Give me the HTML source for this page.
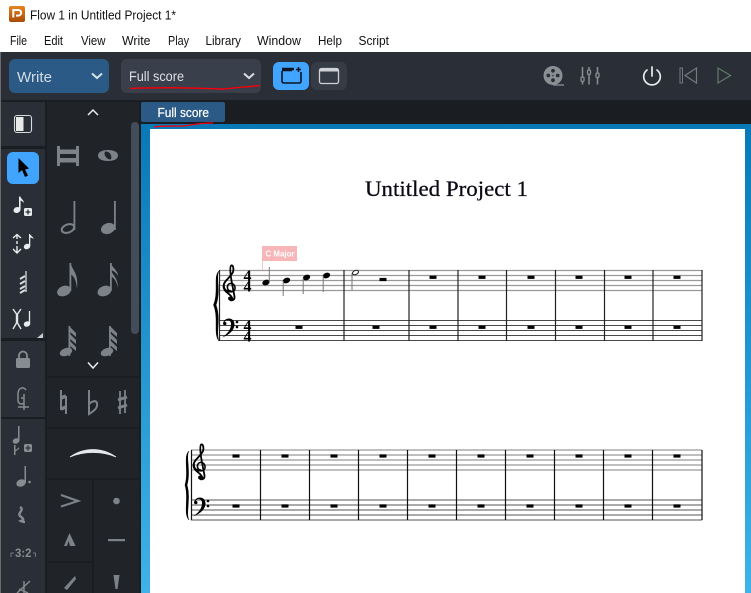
<!DOCTYPE html>
<html><head><meta charset="utf-8"><title>Flow 1</title>
<style>
html,body{margin:0;padding:0;width:751px;height:593px;overflow:hidden;background:#fff}
svg{display:block}
text{font-family:"Liberation Sans",sans-serif}
.m{font-size:12.5px;fill:#111}
</style></head><body>
<svg width="751" height="593" viewBox="0 0 751 593" xmlns="http://www.w3.org/2000/svg">
<defs>
<linearGradient id="bg" x1="0" y1="0" x2="0" y2="1"><stop offset="0" stop-color="#0879b6"/><stop offset="1" stop-color="#40b2e8"/></linearGradient>
<linearGradient id="ic" x1="0" y1="0" x2="0" y2="1"><stop offset="0" stop-color="#e8831f"/><stop offset="1" stop-color="#a84a08"/></linearGradient>
<g id="rest"><rect x="-3.500" y="-1.600" width="7" height="3.200" fill="#000"/></g>
<g id="clef" fill="none" stroke="#000" stroke-linecap="round">
<path d="M1.600 18 C1.600 12 -7.500 11 -7.500 4 C-7.500 -1 0 -5 2 -10 C3.200 -13.500 1.800 -17 .4 -16.600 C-1.300 -16 -1.300 -10 1.500 4 L3.500 14.500 C4 18.500 -.5 19.500 -1.500 17" stroke-width="1.800"/>
<path d="M-.4 9 C-4.600 8.600 -4.600 2.200 -.6 1.400 C4.200 .8 6 8.400 1.400 9.600 C-3 10.600 -7.500 8 -7 3" stroke-width="1.600"/>
<circle cx="-1" cy="16.500" r="1.900" fill="#000" stroke="none"/>
</g>
<g id="bass" fill="#000">
<path d="M-5 -3.500 C-4 -10 6 -10.500 6.500 -3 C6.800 4 -.5 8.500 -6 10.500 C-1 7 3 3 3 -3 C3 -7.500 -2 -8 -3.500 -5 C-1.500 -6 -.5 -2 -3 -1.800 C-4.300 -1.800 -5 -2.500 -5 -3.500Z"/>
<circle cx="9" cy="-5" r="1.300"/><circle cx="9" cy="0" r="1.300"/>
</g>
<g id="head"><ellipse cx="0" cy="0" rx="3.800" ry="2.700" transform="rotate(-22)" fill="#000"/></g>
<g id="qnote" fill="#7c8288"><ellipse cx="0" cy="0" rx="7.200" ry="5" transform="rotate(-22)"/></g>
</defs>

<!-- Title bar -->
<rect width="751" height="52" fill="#fff"/>
<rect x="9" y="6" width="16" height="16" rx="2" fill="url(#ic)"/>
<path d="M13.300 17.500 V10 H18 C22.200 10 22.200 15.600 18 15.600 H16" fill="none" stroke="#fff" stroke-width="2"/>
<text x="30" y="19.500" font-size="12.500" fill="#111" textLength="146" lengthAdjust="spacingAndGlyphs">Flow 1 in Untitled Project 1*</text>
<text class="m" x="10" y="45" textLength="17" lengthAdjust="spacingAndGlyphs">File</text>
<text class="m" x="44" y="45" textLength="19" lengthAdjust="spacingAndGlyphs">Edit</text>
<text class="m" x="81" y="45" textLength="24.500" lengthAdjust="spacingAndGlyphs">View</text>
<text class="m" x="122" y="45" textLength="28.500" lengthAdjust="spacingAndGlyphs">Write</text>
<text class="m" x="168" y="45" textLength="21" lengthAdjust="spacingAndGlyphs">Play</text>
<text class="m" x="205.500" y="45" textLength="35.500" lengthAdjust="spacingAndGlyphs">Library</text>
<text class="m" x="257" y="45" textLength="44" lengthAdjust="spacingAndGlyphs">Window</text>
<text class="m" x="318" y="45" textLength="24" lengthAdjust="spacingAndGlyphs">Help</text>
<text class="m" x="358.500" y="45" textLength="30.500" lengthAdjust="spacingAndGlyphs">Script</text>

<!-- Toolbar -->
<rect x="0" y="52" width="751" height="48" fill="#2a2f37"/>
<rect x="9" y="59" width="100" height="34" rx="6" fill="#2a5a85"/>
<text x="17" y="82" font-size="15" fill="#d2dce4" textLength="35" lengthAdjust="spacingAndGlyphs">Write</text>
<path d="M92 73.500 L97 78 L102 73.500" fill="none" stroke="#d8e0e6" stroke-width="2"/>
<rect x="121" y="59" width="140" height="34" rx="6" fill="#393f4b"/>
<text x="129" y="81" font-size="13.500" fill="#dde1e5" textLength="55" lengthAdjust="spacingAndGlyphs">Full score</text>
<path d="M244 73.500 L249 78 L254 73.500" fill="none" stroke="#d8dde2" stroke-width="2"/>
<path d="M130 88.500 C160 87 190 88 222 89 C236 88 248 86.500 260 85.500" fill="none" stroke="#f0000d" stroke-width="1.500"/>
<rect x="273" y="62" width="36" height="28" rx="6" fill="#41a5ff"/>
<path d="M282 71 V81 Q282 83 284 83 H299 Q301 83 301 81 V72" fill="none" stroke="#0b1420" stroke-width="1.600"/>
<path d="M282 69 H294 M282 70 H292" stroke="#0b1420" stroke-width="2.500"/>
<path d="M298.500 67 V72 M296 69.500 H301" stroke="#0b1420" stroke-width="1.500"/>
<rect x="311" y="62" width="36" height="28" rx="6" fill="#363c46"/>
<rect x="319.500" y="68.500" width="19" height="15" rx="2" fill="none" stroke="#cfd3d6" stroke-width="1.300"/>
<rect x="319.500" y="68.500" width="19" height="3" fill="#cfd3d6"/>

<!-- reel -->
<circle cx="553" cy="75.500" r="9.500" fill="#8a8f94"/>
<g fill="#2a2f37"><circle cx="553" cy="70.800" r="1.900"/><circle cx="553" cy="80.200" r="1.900"/><circle cx="548.300" cy="75.500" r="1.900"/><circle cx="557.700" cy="75.500" r="1.900"/></g>
<circle cx="553" cy="75.500" r=".8" fill="#2a2f37"/>
<path d="M553 85 H564" stroke="#8a8f94" stroke-width="1.300"/>
<!-- mixer -->
<path d="M582.500 67 V84.500 M589 67 V84.500 M597.500 67 V84.500" stroke="#8a8f94" stroke-width="1.500"/>
<g fill="#2a2f37" stroke="#8a8f94" stroke-width="1.300"><rect x="581" y="77" width="3" height="4.500" rx="1.200"/><rect x="587.500" y="70" width="3" height="4.500" rx="1.200"/><rect x="596" y="73" width="3" height="4.500" rx="1.200"/></g>
<!-- power -->
<path d="M647 70 A8.300 8.300 0 1 0 657 70" fill="none" stroke="#e9edf0" stroke-width="1.700" stroke-linecap="round"/>
<path d="M652 67 V76" stroke="#e9edf0" stroke-width="1.700" stroke-linecap="round"/>
<!-- rewind -->
<rect x="680" y="68" width="2.500" height="15" fill="none" stroke="#747a80" stroke-width="1"/>
<path d="M696.500 68 V83 L685 75.500Z" fill="none" stroke="#747a80" stroke-width="1.200"/>
<!-- play -->
<path d="M718 68 V83 L730.500 75.500Z" fill="none" stroke="#5f7a66" stroke-width="1.200"/>

<!-- dark strip -->
<rect x="0" y="100" width="751" height="24" fill="#1a1d21"/>
<rect x="141" y="102" width="84" height="20" rx="2" fill="#2a5a85"/>
<text x="157.500" y="117" font-size="12.500" fill="#fff" stroke="#fff" stroke-width=".2" textLength="51.500" lengthAdjust="spacingAndGlyphs">Full score</text>

<!-- canvas -->
<rect x="141" y="124" width="610" height="469" fill="url(#bg)"/>
<rect x="150" y="129" width="595" height="464" fill="#fff"/>
<path d="M154 127 C165 125 178 127 188 125.500 C196 123.500 205 123.500 213 122.800" fill="none" stroke="#f0000d" stroke-width="1.300"/>

<!-- left rail -->
<rect x="0" y="100" width="141" height="493" fill="#1a1d21"/>
<rect x="1" y="102" width="44" height="44" fill="#2a2f37"/>
<rect x="1" y="149" width="44" height="189" fill="#2a2f37"/>
<rect x="1" y="341" width="44" height="76" fill="#2a2f37"/>
<rect x="1" y="419" width="44" height="174" fill="#2a2f37"/>
<rect x="0" y="52" width="1" height="541" fill="#6a6a6a"/>
<!-- panel -->
<rect x="47" y="102" width="92" height="274" fill="#202429"/>
<rect x="47" y="378" width="92" height="49" fill="#202429"/>
<rect x="47" y="429" width="92" height="49" fill="#202429"/>
<rect x="47" y="480" width="45" height="81" fill="#202429"/>
<rect x="47" y="563" width="45" height="30" fill="#202429"/>
<rect x="94" y="480" width="45" height="113" fill="#202429"/>
<rect x="131" y="122" width="8" height="212" rx="4" fill="#434d59"/>

<!-- left rail icons -->
<rect x="14.500" y="115.500" width="17" height="17" rx="2.500" fill="none" stroke="#d7dbde" stroke-width="1.100"/>
<rect x="16" y="117" width="7.500" height="14" fill="#e6e8e9"/>
<rect x="7" y="152" width="32" height="32" rx="6" fill="#41a5ff"/>
<path d="M18.500 158 L18.500 173 L22 170 L25 177 L28 175.500 L25 169.500 L29 168.500Z" fill="#000"/>
<g fill="#e8ecef">
<ellipse cx="17" cy="210" rx="3.600" ry="2.900" transform="rotate(-20 17 210)"/>
<path d="M19 209 V196.500 H20.300 C21 199 24 200 24 203 C23 201.500 21.500 201 20.600 200.500 V209Z"/>
<rect x="24" y="208" width="8" height="8" rx="1.500"/>
</g>
<path d="M28 209.500 V214.500 M25.500 212 H30.500" stroke="#2a2f37" stroke-width="1.300"/>
<g fill="none" stroke="#e8ecef" stroke-width="1.400">
<path d="M17 235 V239 M17 241 V244 M17 246 V253 M13 238 L17 234.500 L21 238 M13 249 L17 253 L21 249"/>
</g>
<g fill="#e8ecef">
<ellipse cx="27" cy="246.500" rx="3.300" ry="2.700" transform="rotate(-20 27 246.500)"/>
<path d="M29 246 V234 H30 C30.500 236 33.500 236.500 33.500 239 C32.500 238 31 237.500 30.300 237.500 V246Z"/>
</g>
<path d="M26 271 V292" stroke="#d6dadd" stroke-width="1.300"/>
<path d="M20 279 L25 276 M20 284 L25 281 M20 289 L25 286 M20 293 L25 290" stroke="#d6dadd" stroke-width="2"/>
<path d="M13 309 L16.500 314 V323 L13 329 M21 309 L17.500 314 V323 L21 329" fill="none" stroke="#e2e6e9" stroke-width="1.400"/>
<ellipse cx="27" cy="324" rx="3.300" ry="2.700" fill="#e8ecef" transform="rotate(-20 27 324)"/>
<path d="M29.500 324 V311" stroke="#e8ecef" stroke-width="1.300"/>
<path d="M37 338 H43 V333Z" fill="#c9cdd0"/>
<!-- lock -->
<path d="M19 358 V356 C19 350 27 350 27 356 V358" fill="none" stroke="#868c92" stroke-width="1.800"/>
<rect x="16" y="358" width="14" height="10" rx="1.500" fill="#868c92"/>
<!-- guitar/clamp -->
<path d="M26 390 C23 386 18 388 18 394 V400 C18 404 22 405 24 403 V398 H21 M24 394 V410 M18 407 H29" fill="none" stroke="#868c92" stroke-width="1.500"/>
<!-- lower left -->
<g fill="#868c92">
<ellipse cx="16" cy="441" rx="3.400" ry="2.700" transform="rotate(-20 16 441)"/>
<rect x="18" y="426" width="1.500" height="15"/>
<path d="M14 450 C16 450 18 448.500 19 447 V449 L15.300 451.500 V450Z"/>
<rect x="14" y="445" width="1.500" height="10"/>
<rect x="24" y="444" width="8" height="8" rx="1.500"/>
<ellipse cx="21" cy="483" rx="4.800" ry="3.600" transform="rotate(-20 21 483)"/>
<rect x="24.500" y="466" width="1.500" height="17"/>
<circle cx="29.500" cy="482" r="1.300"/>
</g>
<path d="M28 445.500 V450.500 M25.500 448 H30.500" stroke="#2a2f37" stroke-width="1.200"/>
<path d="M20 507 C25 510 17 513 20 516 C24 519 24 520 21 521 C23 522 24 522 25 522" fill="none" stroke="#868c92" stroke-width="2.400"/>
<text x="15" y="557" font-size="11.500" font-weight="bold" fill="#868c92" textLength="16.500" lengthAdjust="spacingAndGlyphs">3:2</text>
<path d="M11 557 V553 H14 M35.500 557 V553 H33" fill="none" stroke="#868c92" stroke-width=".8"/>
<g fill="none" stroke="#868c92" stroke-width="1.400"><path d="M24 581 V593 M17 593 L30 581 M19 589 L28 593"/></g>

<!-- panel icons -->
<path d="M88 115 L93 110 L98 115" fill="none" stroke="#e8ecef" stroke-width="1.500"/>
<path d="M88 362.500 L93 368 L98 362.500" fill="none" stroke="#e8ecef" stroke-width="1.500"/>
<g fill="#7c8288">
<rect x="57" y="146" width="3" height="20"/><rect x="76" y="146" width="3" height="20"/>
<rect x="57" y="149.500" width="22" height="4.500"/><rect x="57" y="158" width="22" height="4.500"/>
<path fill-rule="evenodd" d="M108 150 C114 150 118 152 118 155.500 C118 159 114 161 108 161 C102 161 98 159 98 155.500 C98 152 102 150 108 150Z M105.500 151.500 C103.500 152 104.500 158.500 110 159.500 C112.500 159.500 111.500 153 108 152 C107 151.500 106 151.500 105.500 151.500Z"/>
<rect x="73.500" y="201" width="1.800" height="29"/>
<rect x="114" y="201" width="1.800" height="29"/>
</g>
<ellipse cx="68" cy="228.500" rx="6.500" ry="4" fill="none" stroke="#7c8288" stroke-width="2" transform="rotate(-20 68 228.500)"/>
<ellipse cx="108" cy="228.500" rx="7.200" ry="5.300" fill="#7c8288" transform="rotate(-20 108 228.500)"/>
<use href="#qnote" x="64" y="291"/>
<use href="#qnote" x="104.500" y="291"/>
<g fill="#7c8288">
<rect x="69.500" y="263" width="1.800" height="28"/>
<path d="M70.500 263 C72 270 79 273 77 289 C76 278 73 276 70.500 274Z"/>
<rect x="110" y="263" width="1.800" height="28"/>
<path d="M111 263 C112 268 118 270 118 276 C116 272 113 271 111 270Z M111 270 C112 275 118 277 118 288 C116 279 113 278 111 276Z"/>
<rect x="68.500" y="326" width="1.800" height="30"/>
<rect x="109" y="326" width="1.800" height="30"/>
<path d="M69 326 L76 333 V337 L69 331Z M69 333 L76 340 V344 L69 338Z M69 340 L76 347 V351 L69 345Z"/>
<path d="M110 326 L117 333 V337 L110 331Z M110 333 L117 340 V344 L110 338Z M110 340 L117 347 V351 L110 345Z"/>
<ellipse cx="66" cy="352" rx="6.500" ry="3.800" transform="rotate(-20 66 352)"/>
<ellipse cx="107" cy="352" rx="6.500" ry="3.800" transform="rotate(-20 107 352)"/>
</g>
<!-- accidentals -->
<g fill="none" stroke="#7c8288">
<path d="M61 390 V410 M66 396 V414" stroke-width="2"/>
<path d="M61 398 L66 396 M61 409 L66 407" stroke-width="3.500"/>
<path d="M89 390 V414 C94 411 98 408 97 403 C96 400 92 401 89 404" stroke-width="2"/>
<path d="M120 391 V414 M125 390 V413" stroke-width="1.800"/>
<path d="M118 400 L127 397 M118 408 L127 405" stroke-width="3"/>
</g>
<!-- slur -->
<path d="M70 457 C84 447 102 447 116 457 C102 451 84 451 70 457Z" fill="#e6e9eb" stroke="#e6e9eb" stroke-width=".8"/>
<!-- articulations -->
<path d="M61 495 L78 501 L61 506.500" fill="none" stroke="#7c8288" stroke-width="2.200"/>
<circle cx="116.500" cy="501" r="3.300" fill="#7c8288"/>
<path d="M64 546 L69.500 533 L75.500 546 L70 546 L68.500 541 L67 546Z" fill="#7c8288"/>
<rect x="108" y="539" width="17" height="2.200" fill="#7c8288"/>
<path d="M64 588 L75 576 L76 579 L67 590Z" fill="#7c8288"/>
<path d="M113.500 575 H119.500 L117.500 589 H115.500Z" fill="#7c8288"/>

<!-- Title -->
<text x="365" y="196" font-size="22" style="font-family:'Liberation Serif',serif" fill="#0a0a14" stroke="#0a0a14" stroke-width=".25" textLength="163" lengthAdjust="spacingAndGlyphs">Untitled Project 1</text>

<!-- System 1 -->
<g stroke-width="1">
<path d="M219 270.500 H702 M219 275.500 H702 M219 280.500 H702 M219 285.500 H702 M219 290.500 H702" stroke="#999" stroke-width="1.200"/>
<path d="M219 320.500 H702 M219 325.500 H702 M219 330.500 H702 M219 335.500 H702 M219 340.500 H702" stroke="#4a4a4a"/>
</g>
<path d="M219.500 270 V341 M344 270 V341 M409 270 V341 M458 270 V341 M506.500 270 V341 M555.500 270 V341 M604.500 270 V341 M653 270 V341 M702 270 V341" stroke="#222" stroke-width="1.200"/>
<path d="M219 271 C213 276 219 292 213.500 305 C219 318 213 334 219 341 C215.500 334 221 318 216 305 C221 292 215.500 276 219 271Z" fill="#000" stroke="#000" stroke-width=".5"/>
<use href="#clef" x="231" y="282"/>
<use href="#bass" x="228" y="327"/>
<g font-weight="bold" font-size="16" fill="#000">
<text x="243.500" y="281" style="font-family:'Liberation Serif',serif">4</text><text x="243.500" y="291.500" style="font-family:'Liberation Serif',serif">4</text>
<text x="243.500" y="331" style="font-family:'Liberation Serif',serif">4</text><text x="243.500" y="341.500" style="font-family:'Liberation Serif',serif">4</text>
</g>
<rect x="262" y="246" width="35" height="15" fill="#f8b6b8"/>
<text x="265.500" y="256.500" font-size="8" font-weight="bold" fill="#fff" textLength="29" lengthAdjust="spacingAndGlyphs">C Major</text>
<rect x="262" y="261" width="1" height="9" fill="#f4c4c6"/>
<use href="#head" x="266" y="282.500"/>
<use href="#head" x="286.500" y="280.500"/>
<use href="#head" x="306.500" y="277.500"/>
<use href="#head" x="326.500" y="275.500"/>
<path d="M269.300 267 V282 M283.200 281 V296 M303.200 278 V294 M323.200 276 V292 M352 273 V290" stroke="#777" stroke-width="1"/>
<ellipse cx="355.500" cy="272.500" rx="3.200" ry="2" fill="#fff" stroke="#222" stroke-width="1" transform="rotate(-25 355.500 272.500)"/>
<use href="#rest" x="383" y="279.500"/>
<use href="#rest" x="433" y="277.300"/><use href="#rest" x="482" y="277.300"/><use href="#rest" x="531" y="277.300"/><use href="#rest" x="579" y="277.300"/><use href="#rest" x="628" y="277.300"/><use href="#rest" x="677" y="277.300"/>
<use href="#rest" x="299" y="327.300"/><use href="#rest" x="376" y="327.300"/><use href="#rest" x="433" y="327.300"/><use href="#rest" x="482" y="327.300"/><use href="#rest" x="531" y="327.300"/><use href="#rest" x="579" y="327.300"/><use href="#rest" x="628" y="327.300"/><use href="#rest" x="677" y="327.300"/>

<!-- System 2 -->
<g fill="none" stroke-width="1.200">
<path d="M191 450 H702 M191 455 H702 M191 460 H702 M191 465 H702 M191 470 H702" stroke="#999"/>
<path d="M191 500 H702 M191 505 H702 M191 510 H702 M191 515 H702 M191 520 H702" stroke="#777"/>
</g>
<path d="M191.500 450 V520 M260.500 450 V520 M309.500 450 V520 M358.500 450 V520 M407.500 450 V520 M456.500 450 V520 M505.500 450 V520 M554.500 450 V520 M603.500 450 V520 M652.500 450 V520 M702 450 V520" stroke="#111" stroke-width="1.200"/>
<path d="M189 451 C183 456 189 472 185 485 C189 498 183 514 189 520 C185.500 514 191 498 187 485 C191 472 185.500 456 189 451Z" fill="#000" stroke="#000" stroke-width=".5"/>
<use href="#clef" x="201" y="461"/>
<use href="#bass" x="199" y="506"/>
<use href="#rest" x="236" y="456"/><use href="#rest" x="285" y="456"/><use href="#rest" x="334" y="456"/><use href="#rest" x="383" y="456"/><use href="#rest" x="432" y="456"/><use href="#rest" x="481" y="456"/><use href="#rest" x="530" y="456"/><use href="#rest" x="579" y="456"/><use href="#rest" x="628" y="456"/><use href="#rest" x="677" y="456"/>
<use href="#rest" x="236" y="506"/><use href="#rest" x="285" y="506"/><use href="#rest" x="334" y="506"/><use href="#rest" x="383" y="506"/><use href="#rest" x="432" y="506"/><use href="#rest" x="481" y="506"/><use href="#rest" x="530" y="506"/><use href="#rest" x="579" y="506"/><use href="#rest" x="628" y="506"/><use href="#rest" x="677" y="506"/>
</svg>
</body></html>
